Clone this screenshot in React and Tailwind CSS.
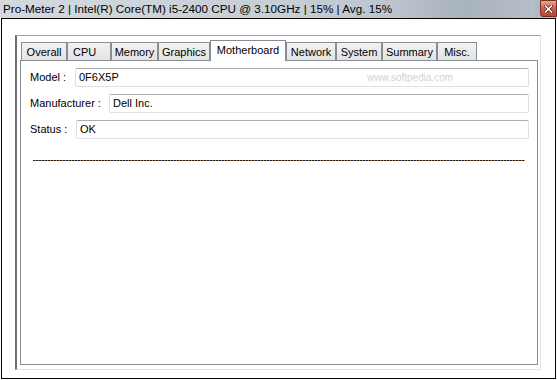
import React from "react";

const tabs = [
  { label: "Overall", w: 46 },
  { label: "CPU", w: 44, left: true },
  { label: "Memory", w: 47 },
  { label: "Graphics", w: 52 },
  { label: "Motherboard", w: 76, active: true },
  { label: "Network", w: 50 },
  { label: "System", w: 46 },
  { label: "Summary", w: 55 },
  { label: "Misc.", w: 40 },
];

function Tab({ label, w, active, left }) {
  if (active) {
    return (
      <div
        className="relative z-10 -mb-px flex h-[21px] shrink-0 items-center justify-center border border-b-0 border-[#898c95] bg-white pb-[2px] text-[11px] text-black"
        style={{ width: w }}
      >
        {label}
      </div>
    );
  }
  return (
    <div
      className={
        left
          ? "flex h-[18px] shrink-0 items-center justify-start border border-b-0 border-[#898c95] bg-gradient-to-b from-[#f2f2f2] to-[#e3e3e3] pl-[5px] pt-[1px] text-[11px] text-black"
          : "flex h-[18px] shrink-0 items-center justify-center border border-b-0 border-[#898c95] bg-gradient-to-b from-[#f2f2f2] to-[#e3e3e3] pt-[1px] text-[11px] text-black"
      }
      style={{ width: w }}
    >
      {label}
    </div>
  );
}

function Field({ label, labelW, value }) {
  return (
    <div className="flex h-[19px] items-center">
      <div className="shrink-0 text-[11px] text-black" style={{ width: labelW }}>
        {label}
      </div>
      <div className="flex h-[19px] flex-1 items-center rounded-[2px] border border-[#dde1e7] border-t-[#abadb3] bg-white pl-[3px] text-[11px] text-black">
        {value}
      </div>
    </div>
  );
}

export default function App() {
  return (
    <div
      className="relative h-[380px] w-[557px] overflow-hidden bg-white"
      style={{ fontFamily: '"Liberation Sans", Arial, sans-serif' }}
    >
      {/* Title bar */}
      <div className="relative flex h-[18px] items-center bg-gradient-to-r from-[#d3d9df] via-[#c6ced6] to-[#aeb8c2]">
        <div className="absolute left-[395px] top-0 h-[18px] w-[140px] bg-gradient-to-r from-transparent via-[#a4aeb8] to-[#b8c1ca] opacity-70" />
        <span className="relative pl-[3px] text-[11.7px] text-black">
          Pro-Meter 2 | Intel(R) Core(TM) i5-2400 CPU @ 3.10GHz | 15% | Avg. 15%
        </span>
        <div className="absolute right-0 top-0 flex h-[17px] w-[17px] items-center justify-center rounded-bl-[3px] border border-[#7a3025] bg-gradient-to-b from-[#e7a58e] via-[#d15e45] to-[#c4402a]">
          <svg width="9" height="8" viewBox="0 0 9 8">
            <path d="M1.5 1 L7.5 7 M7.5 1 L1.5 7" stroke="#4a1a12" strokeWidth="3" strokeLinecap="square" />
            <path d="M1.5 1 L7.5 7 M7.5 1 L1.5 7" stroke="#ffffff" strokeWidth="1.6" strokeLinecap="square" />
          </svg>
        </div>
      </div>

      {/* Window client */}
      <div className="mx-[1px] flex h-[361px] flex-col border border-black bg-white">
        <div className="ml-[13px] mt-[16px] flex h-[335px] w-[526px] flex-col border-b border-l-2 border-r border-t border-b-[#e3e3e3] border-l-[#6f6f6f] border-r-[#e3e3e3] border-t-[#a0a0a0] pb-[4px] pl-[3px] pr-[2px] pt-[4px]">
          {/* Tab strip */}
          <div className="relative flex h-[20px] items-end pl-[1px]">
            {tabs.map((t) => (
              <Tab key={t.label} {...t} />
            ))}
          </div>
          {/* Tab panel */}
          <div className="relative flex flex-1 flex-col border border-[#898c95] bg-white pl-[9px] pr-[8px] pt-[7px]">
            <div className="flex flex-col gap-[7px]">
              <Field label="Model :" labelW={45} value="0F6X5P" />
              <Field label="Manufacturer :" labelW={79} value="Dell Inc." />
              <Field label="Status :" labelW={46} value="OK" />
            </div>
            <div className="ml-[3px] mr-[4px] mt-[21px] h-[1px] bg-[repeating-linear-gradient(90deg,#0f1f3a_0_2px,#c07a18_2px_3px)]" />
            <div className="pointer-events-none absolute left-[346px] top-[9px] text-[10px] text-[#d2d2d2]">
              www.softpedia.com
            </div>
          </div>
        </div>
      </div>
    </div>
  );
}
